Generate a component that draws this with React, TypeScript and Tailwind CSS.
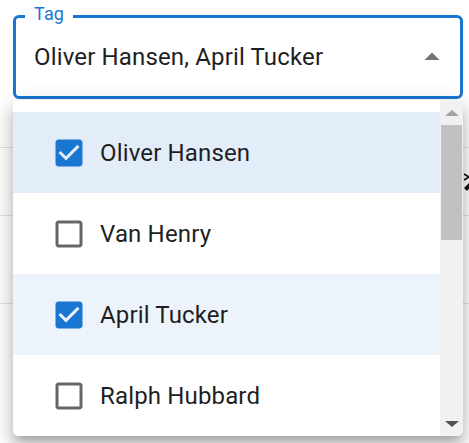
import { useState } from "react";

const PEOPLE = ["Oliver Hansen", "Van Henry", "April Tucker", "Ralph Hubbard"];

function CheckboxIcon({ checked }: { checked: boolean }) {
  return (
    <svg viewBox="0 0 24 24" className="w-[36px] h-[36px] shrink-0">
      {checked ? (
        <path
          fill="#1976d2"
          d="M19 3H5c-1.11 0-2 .9-2 2v14c0 1.1.89 2 2 2h14c1.1 0 2-.9 2-2V5c0-1.1-.9-2-2-2zm-9 14l-5-5 1.41-1.41L10 14.17l7.59-7.59L19 8l-9 9z"
        />
      ) : (
        <path
          fill="#666666"
          d="M19 5v14H5V5h14m0-2H5c-1.11 0-2 .9-2 2v14c0 1.1.89 2 2 2h14c1.1 0 2-.9 2-2V5c0-1.1-.9-2-2-2z"
        />
      )}
    </svg>
  );
}

export default function App() {
  const [selected] = useState<string[]>(["Oliver Hansen", "April Tucker"]);

  return (
    <div className="relative w-[469px] h-[443px] overflow-hidden bg-white font-['Roboto',sans-serif] tracking-[0.00938em]">
      {/* text field */}
      <div className="pt-[15px] pl-[13px]">
        <div className="relative w-[450px] h-[84px] rounded-[6px] border-[3px] border-[#1976d2] flex items-center pl-[18px] pr-[10px]">
          <span className="absolute left-[9px] -top-[13px] bg-white px-[9px] text-[18px] leading-[18px] text-[#1976d2]">
            Tag
          </span>
          <span className="flex-1 text-[24px] leading-[28px] text-[#1f1f1f]">{selected.join(", ")}</span>
          <svg viewBox="0 0 24 24" className="w-[36px] h-[36px]">
            <path fill="#757575" d="M7 14l5-5 5 5z" />
          </svg>
        </div>
      </div>

      {/* page content behind the menu */}
      <div className="flex flex-col">
        <div className="h-[49px] border-b border-[#e0e0e0]" />
        <div className="h-[68px] border-b border-[#e0e0e0] flex justify-end items-center">
          <svg viewBox="0 0 12 20" className="w-[12px] h-[20px] mr-[-6px]">
            <path d="M1 2l5 3-5 3" fill="none" stroke="#111" strokeWidth="1.6" />
            <path d="M1 16l5-5 3 2-5 6z" fill="#111" />
          </svg>
        </div>
        <div className="h-[88px] border-b border-[#e0e0e0]" />
      </div>

      {/* open menu */}
      <div className="absolute left-[13px] top-[100px] w-[450px] h-[336px] rounded-[6px] bg-white overflow-hidden flex shadow-[0_7px_8px_-4px_rgba(0,0,0,0.2),0_12px_15px_2px_rgba(0,0,0,0.14),0_4px_21px_3px_rgba(0,0,0,0.12)]">
        <ul className="flex-1 pt-[12px]">
          {PEOPLE.map((name, i) => {
            const checked = selected.includes(name);
            const bg = i === 0 ? "bg-[#e3edf9]" : checked ? "bg-[#ecf3fb]" : "bg-white";
            return (
              <li key={name} className={`h-[81px] flex items-center pl-[25px] ${bg}`}>
                <span className="p-[13px] flex">
                  <CheckboxIcon checked={checked} />
                </span>
                <span className="text-[24px] leading-[28px] text-[#1f1f1f]">{name}</span>
              </li>
            );
          })}
        </ul>
        <div className="w-[23px] bg-[#f1f1f1] flex flex-col items-center">
          <div className="h-[25px] flex items-center justify-center">
            <div className="w-0 h-0 border-l-[7px] border-r-[7px] border-b-[6px] border-l-transparent border-r-transparent border-b-[#a3a3a3]" />
          </div>
          <div className="w-[21px] h-[115px] bg-[#c1c1c1]" />
          <div className="flex-1" />
          <div className="h-[25px] flex items-center justify-center">
            <div className="w-0 h-0 border-l-[7px] border-r-[7px] border-t-[6px] border-l-transparent border-r-transparent border-t-[#505050]" />
          </div>
        </div>
      </div>
    </div>
  );
}
